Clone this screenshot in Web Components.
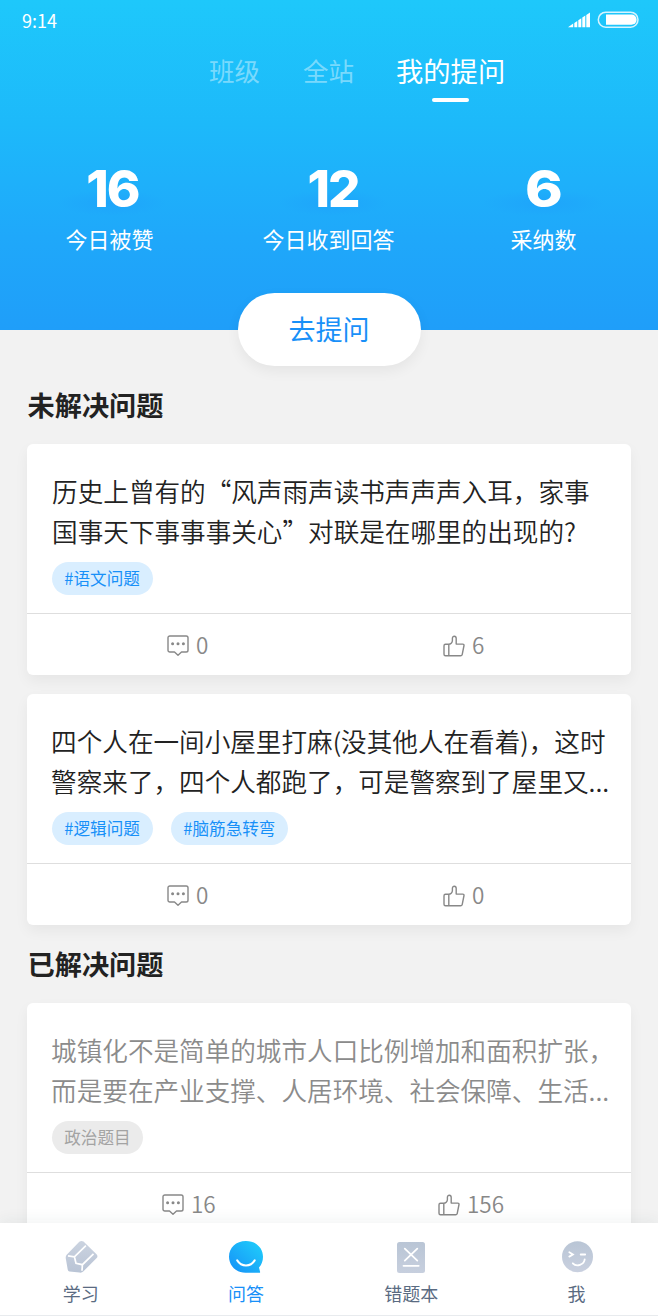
<!DOCTYPE html>
<html lang="zh-CN">
<head>
<meta charset="utf-8">
<title>问答</title>
<style>
html,body{margin:0;height:1316px;overflow:hidden}
body{background:#f2f2f2;font-family:"Noto Sans CJK SC",sans-serif}
</style>
</head>
<body>
<qa-app></qa-app>
<script>
function define(name, html) {
  const t = document.createElement('template');
  t.innerHTML = html;
  customElements.define(name, class extends HTMLElement {
    constructor() {
      super();
      this.attachShadow({mode: 'open'}).appendChild(t.content.cloneNode(true));
    }
  });
}

define('status-bar', `<style>
:host{display:flex;align-items:center;height:40px;padding:0 19px 0 22px;color:#fff;font-size:18px;line-height:40px}
span{flex:1}svg{display:block}
</style><span><slot></slot></span>
<svg width="71" height="18" viewBox="0 0 71 18">
<g fill="#fff"><path d="M0 16.200L5.200 12.600v3.600zM6.300 11.900l3-2v6.300h-3zM10.300 9.300l3-2v8.900h-3zM14.300 6.600l3-2v11.600h-3zM18.300 4l3.700-2.400v14.600h-3.700z"/>
<path d="M38 3.600h25.500a5 5 0 0 1 0 10.200H38z"/></g>
<rect x="30.300" y="1.200" width="39.700" height="15" rx="7.500" fill="none" stroke="#d6f4ff" stroke-width="1.500"/></svg>`);

define('top-tab', `<style>
:host{display:block;font-size:25.500px;line-height:38px;color:rgba(255,255,255,.42);white-space:nowrap}
:host([active]){font-size:27.300px;color:#fff;margin-left:-1px}
i{display:none;width:37px;height:4px;border-radius:2px;background:#fff;margin:9px auto 0}
:host([active]) i{display:block}
</style><slot></slot><i></i>`);

define('stat-item', `<style>
:host{display:flex;flex-direction:column;align-items:center;color:#fff}
b{position:relative;left:var(--dx,0);font:800 51px/46px Inter,sans-serif;transform:scaleX(var(--sx,1));letter-spacing:-2px}
b::before{content:"";position:absolute;z-index:-1;left:50%;bottom:-4px;width:110px;height:26px;margin-left:-55px;background:radial-gradient(closest-side,rgba(30,145,250,.3),transparent)}
span{font-size:22px;line-height:32px;margin-top:10px}
</style><b><slot name="value"></slot></b><span><slot></slot></span>`);

define('ask-button', `<style>
:host{display:block;width:183px;height:73px;border-radius:37px;background:#fff;color:#1890f8;font-size:27px;line-height:72px;text-align:center;box-shadow:0 5px 14px rgba(0,0,0,.06)}
</style><slot></slot>`);

define('app-header', `<style>
:host{display:block;position:relative;z-index:0;height:330px;background:linear-gradient(#1ec8fb 0%,#1db9fa 38%,#1fa8fa 72%,#1f9ef9 100%)}
.tabs{display:flex;gap:43px;padding:11px 0 0 209px;height:55px}
.stats{display:flex;padding:60px 0 0}
stat-item:nth-child(1){width:219px}stat-item:nth-child(2){width:219px}stat-item:nth-child(3){width:211px}
ask-button{position:absolute;left:237.500px;top:293px}
</style><status-bar>9:14</status-bar>
<div class="tabs"><top-tab>班级</top-tab><top-tab>全站</top-tab><top-tab active>我的提问</top-tab></div>
<div class="stats">
<stat-item style="--dx:3px"><span slot="value">16</span>今日被赞</stat-item>
<stat-item style="--dx:4.500px"><span slot="value">12</span>今日收到回答</stat-item>
<stat-item style="--sx:1.120;--dx:-1px"><span slot="value">6</span>采纳数</stat-item></div>
<ask-button>去提问</ask-button>`);

define('section-title', `<style>
:host{display:block;font-size:27.200px;font-weight:700;line-height:40px;color:#222;padding-left:27.500px}
</style><slot></slot>`);

define('tag-pill', `<style>
:host{display:block;height:33px;border-radius:17px;padding:0 12.700px;background:#d9eeff;color:#1890f8;font-size:16.600px;line-height:33px;white-space:nowrap}
:host([muted]){background:#ebebeb;color:#a3a3a3}
</style><slot></slot>`);

define('comment-count', `<style>
:host{display:flex;align-items:center;gap:7.500px;line-height:61px}svg{flex:none;margin-top:2px}
</style><svg width="22" height="22" viewBox="0 0 22 22" fill="none" stroke="#888" stroke-width="1.400" stroke-linejoin="round"><path d="M2.800 1h16.400a1.800 1.800 0 0 1 1.800 1.800v12.400a1.800 1.800 0 0 1-1.800 1.800H14.500l-3.500 3.300L7.500 17H2.800A1.800 1.800 0 0 1 1 15.200V2.800A1.800 1.800 0 0 1 2.800 1z"/><g fill="#888" stroke="none"><circle cx="5.600" cy="8.800" r="1.500"/><circle cx="11" cy="8.800" r="1.500"/><circle cx="16.400" cy="8.800" r="1.500"/></g></svg><slot></slot>`);

define('like-count', `<style>
:host{display:flex;align-items:center;gap:7.500px;line-height:61px}svg{flex:none;margin-top:2px}
</style><svg width="22" height="22" viewBox="0 0 22 22" fill="none" stroke="#888" stroke-width="1.400" stroke-linejoin="round"><path d="M5.800 9.200H2.500A1.500 1.500 0 0 0 1 10.700v8.600a1.500 1.500 0 0 0 1.500 1.500h15.100c.8 0 1.400-.5 1.600-1.200l1.800-9.100c.1-.8-.4-1.400-1.200-1.400h-6.600V3.500c0-3-3.800-3-3.800-.2v2.200C9.400 7.800 7.500 9.200 5.800 9.200v11.500"/></svg><slot></slot>`);

define('question-card', `<style>
:host{display:block;margin:0 27.500px 0 27px;height:231.500px;border-radius:6px;background:#fff;box-shadow:0 6px 14px rgba(0,0,0,.05);color:#222}
:host([muted]){color:#8b8b8b}
.body{box-sizing:border-box;height:170.500px;padding:27.500px 0 0 24.600px;border-bottom:1px solid #dedede}
.text{font-size:25.600px;line-height:40px;white-space:nowrap;font-weight:350;margin-left:var(--tx,-.5px)}
.tags{display:flex;gap:18px;margin-top:11px}
.foot{display:grid;grid-template-columns:276px 1fr;font-size:22.500px;font-weight:350;color:#888}
.foot ::slotted(*){padding-left:139.500px}
:host([muted]) .foot ::slotted(*){padding-left:134.500px}
</style><div class="body"><div class="text"><slot></slot></div><div class="tags"><slot name="tag"></slot></div></div>
<div class="foot"><slot name="foot"></slot></div>`);

define('nav-item', `<style>
:host{display:flex;flex-direction:column;align-items:center;width:165.300px;color:#5a6b82;font-size:18px;line-height:26px}
:host([active]){color:#1890f8}
.icon{height:36px;margin:15px 0 6px}
</style><div class="icon"><slot name="icon"></slot></div><slot></slot>`);

define('nav-bar', `<style>
:host{position:absolute;left:0;top:1223px;width:658px;height:92px;display:flex;background:#fff;border-bottom:1px solid #e8ebee;box-shadow:0 -3px 14px rgba(40,60,60,.06)}
svg{display:block}
nav{display:flex;margin-left:-2px}
</style><nav>
<nav-item><svg slot="icon" width="36" height="36" viewBox="0 0 36 36"><defs><linearGradient id="g" x2="0" y2="1"><stop stop-color="#cbd3e0"/><stop offset="1" stop-color="#b9c4d5"/></linearGradient></defs><path d="M16.300 3.800q2-1.600 4.200-.3L33.500 16.300q1.800 1.800.2 3.700L20.500 33.200q-1.500 1.700-4 1.400L6.500 33.500q-1.700-.3-1.800-2L2.700 20q-.1-2 1-3.200z" fill="url(#g)"/><g fill="none" stroke="#fff" stroke-width="1.700"><path d="M5 17.800l6.400 1L22.900 7.600M11.400 18.800l1.600 6.500 6.400 1.400L30.500 15.800M19.400 26.700l-.4 6"/></g></svg>学习</nav-item>
<nav-item active><svg slot="icon" width="36" height="36" viewBox="0 0 36 36"><defs><linearGradient id="b" x1="1" x2="0" y2="1"><stop stop-color="#20d1fb"/><stop offset="1" stop-color="#168ff7"/></linearGradient></defs><path d="M18 3C8 3 1 9.800 1 18.700S8.200 34.800 17.500 34.800H31.300q1.200 0 .7-1.200l-1-4.200C33.700 26.500 35 22.800 35 18.700 35 9.800 28 3 18 3z" fill="url(#b)"/><path d="M9.200 22.400c4.300 6.800 13.300 6.800 17.500 0" fill="none" stroke="#fff" stroke-width="2" stroke-linecap="round"/></svg>问答</nav-item>
<nav-item><svg slot="icon" width="36" height="36" viewBox="0 0 36 36"><defs><linearGradient id="e" x2="0" y2="1"><stop stop-color="#b9c5d5"/><stop offset="1" stop-color="#c7cfde"/></linearGradient></defs><rect x="4" y="4" width="28" height="31" rx="2.500" fill="url(#e)"/><path d="M11.800 10.600l12.500 12M24.300 10.600l-12.500 12M10.500 27.800h15.200" fill="none" stroke="#fff" stroke-width="1.800" stroke-linecap="round"/></svg>错题本</nav-item>
<nav-item><svg slot="icon" width="36" height="36" viewBox="0 0 36 36"><defs><linearGradient id="m" x2="0" y2="1"><stop stop-color="#b9c5d5"/><stop offset="1" stop-color="#c9d0df"/></linearGradient></defs><circle cx="18.500" cy="18.800" r="15.500" fill="url(#m)"/><path d="M10.300 14.300l3.600 2.200-3.600 2.100M21.700 16.500h4.500M13.800 25.300c3.600 4 11.500 1.500 11.900-4" fill="none" stroke="#fff" stroke-width="1.800" stroke-linecap="round"/></svg>我</nav-item>
</nav>`);

define('qa-app', `<style>
:host{display:block;position:relative;width:658px;height:1316px;overflow:hidden;background:#f2f2f2}
section-title{padding-top:54px;margin-bottom:19.500px}
section-title.second{padding-top:18px}
question-card + question-card{margin-top:18.500px}
</style><app-header></app-header>
<section-title>未解决问题</section-title>
<question-card style="--tx:.500px">历史上曾有的“风声雨声读书声声声入耳，家事<br>国事天下事事事关心”对联是在哪里的出现的?<tag-pill slot="tag">#语文问题</tag-pill><comment-count slot="foot">0</comment-count><like-count slot="foot">6</like-count></question-card>
<question-card>四个人在一间小屋里打麻(没其他人在看着)，这时<br>警察来了，四个人都跑了，可是警察到了屋里又...<tag-pill slot="tag">#逻辑问题</tag-pill><tag-pill slot="tag">#脑筋急转弯</tag-pill><comment-count slot="foot">0</comment-count><like-count slot="foot">0</like-count></question-card>
<section-title class="second">已解决问题</section-title>
<question-card muted>城镇化不是简单的城市人口比例增加和面积扩张，<br>而是要在产业支撑、人居环境、社会保障、生活...<tag-pill slot="tag" muted>政治题目</tag-pill><comment-count slot="foot">16</comment-count><like-count slot="foot">156</like-count></question-card>
<nav-bar></nav-bar>`);
</script>
</body>
</html>
